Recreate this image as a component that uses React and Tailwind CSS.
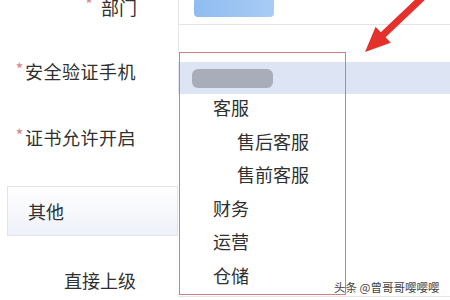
export default function App() {
  const items = [
    { label: "客服", indent: "pl-[33px]" },
    { label: "售后客服", indent: "pl-[57px]" },
    { label: "售前客服", indent: "pl-[57px]" },
    { label: "财务", indent: "pl-[33px]" },
    { label: "运营", indent: "pl-[33px]" },
    { label: "仓储", indent: "pl-[33px]" },
  ];

  return (
    <div
      className="relative w-[450px] h-[300px] overflow-hidden bg-white text-[#303030]"
      style={{ fontFamily: '"Noto Sans CJK SC", "Noto Sans", sans-serif' }}
    >
      <div className="flex h-full">
        {/* label column */}
        <div className="w-[178px] shrink-0 flex flex-col text-[18px] leading-[20px]">
          <div className="-mt-[3px] h-[20px] pr-[41px] text-right">
            <span className="relative -top-[4px] mr-[8px] text-[17px] text-[#d98a8a]">*</span>
            部门
          </div>
          <div className="mt-[44px] h-[20px] pr-[42px] text-right tracking-[0.5px]">
            <span className="relative -top-[3px] mr-[1px] text-[17px] text-[#d98a8a]">*</span>
            安全验证手机
          </div>
          <div className="mt-[46px] h-[20px] pr-[42px] text-right tracking-[0.5px]">
            <span className="relative -top-[3px] mr-[1px] text-[17px] text-[#d98a8a]">*</span>
            证书允许开启
          </div>
          <div className="mt-[39px] ml-[7px] h-[50px] flex items-center pl-[20px] border border-[#e3e4ea] bg-gradient-to-b from-white to-[#eff1f9]">
            其他
          </div>
          <div className="mt-[34px] h-[20px] pr-[42px] text-right">直接上级</div>
        </div>

        {/* field column */}
        <div className="flex-1 flex flex-col">
          <div className="h-[52px] border-l border-[#e4e4e4]">
            <div className="h-[27px] border-b border-[#e4e4e4]">
              <div className="ml-[15px] -mt-[2px] w-[80px] h-[19px] rounded-sm bg-gradient-to-r from-[#8fbcf0] to-[#a8ccf4] blur-[0.6px]" />
            </div>
          </div>
          <div className="mt-[10px] h-[32px] bg-[#dde5f5]" />
          <div className="flex-1" />
          <div className="mb-[3px] border-b border-[#e6e6e6]" />
        </div>
      </div>

      {/* dropdown menu */}
      <div className="absolute left-[179px] top-[52px] w-[167px] h-[243px] border border-[#c98080] bg-white text-[18px]">
        <div className="mt-[9px] h-[32px] bg-[#dde5f5] flex items-center pl-[12px]">
          <div className="w-[81px] h-[19px] rounded-md bg-[#a9acb9] blur-[0.6px]" />
        </div>
        <div className="-mt-[3px]">
          {items.map((it) => (
            <div key={it.label} className={`h-[33.5px] leading-[33.5px] ${it.indent}`}>
              {it.label}
            </div>
          ))}
        </div>
      </div>

      {/* arrow */}
      <svg className="absolute left-0 top-0" width="450" height="300" viewBox="0 0 450 300">
        <polygon
          points="365,52 375.6,26.8 380.8,32.3 422.6,-7.5 427.4,-2.5 385.6,37.3 390.8,42.8"
          fill="#e5312c"
        />
      </svg>

      {/* watermark */}
      <div className="absolute left-[334px] top-[279px] text-[11.5px] leading-[16px] text-[#444] whitespace-nowrap">
        头条 @曾哥哥嘤嘤嘤
      </div>
    </div>
  );
}
